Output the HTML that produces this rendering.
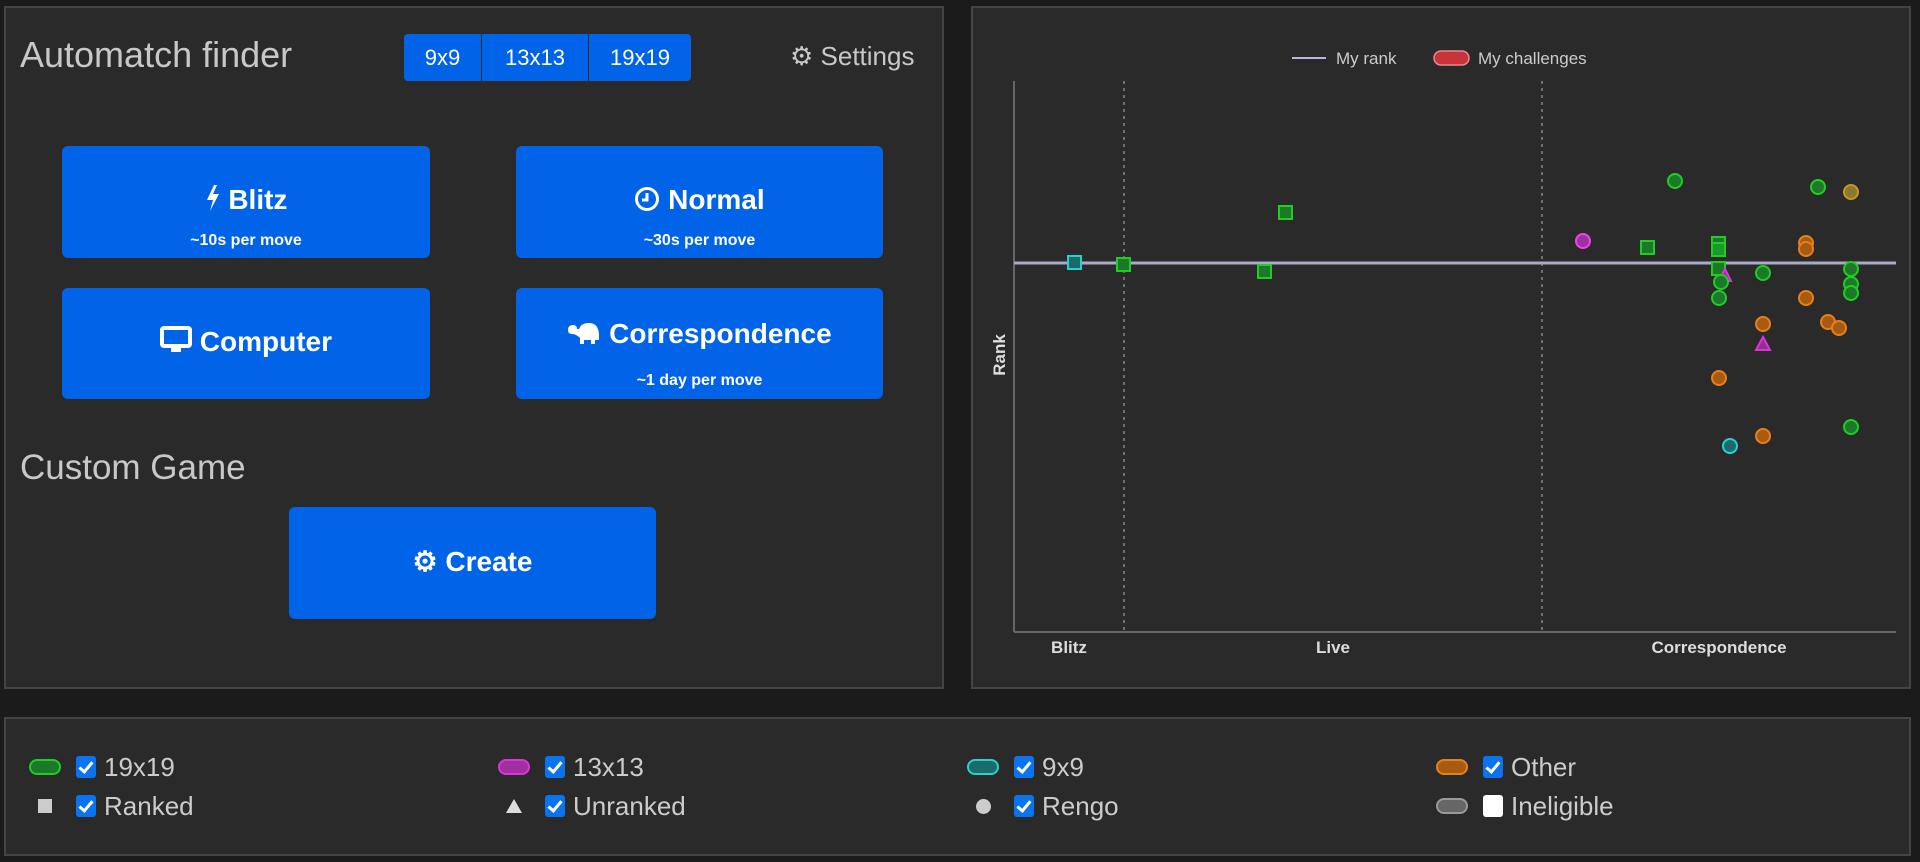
<!DOCTYPE html>
<html><head><meta charset="utf-8"><style>
*{box-sizing:border-box;margin:0;padding:0}
body{width:1920px;height:862px;background:#1b1b1b;font-family:"Liberation Sans",sans-serif;position:relative;overflow:hidden;color:#ddd}
.panel{position:absolute;background:#2a2a2a;border:2px solid #444}
.abs{position:absolute}
.btn{position:absolute;background:#0063e8;border-radius:6px;color:#fff;text-align:center;font-weight:bold}
.btn .t{position:absolute;left:0;right:0;font-size:28px}
.btn .s{position:absolute;left:0;right:0;font-size:16px}
.btn svg{vertical-align:-3px}
.seg{position:absolute;top:34px;height:47px;background:#0063e8;color:#fff;font-size:22px;line-height:47px;text-align:center}
.lg{position:absolute;font-size:26px;color:#ccc;display:flex;align-items:center;height:30px}
.pill{width:32px;height:16px;border-radius:8px;border:2px solid;margin-right:15px}
.cb{width:20px;height:22px;background:#0a74f0;border-radius:3px;margin-right:8px;position:relative}
.cb:after{content:"";position:absolute;left:6px;top:3px;width:5px;height:11px;border:solid #fff;border-width:0 3px 3px 0;transform:rotate(40deg)}
.cb.off{background:#fff}.cb.off:after{display:none}
</style></head><body>
<div class="panel" style="left:4px;top:6px;width:940px;height:683px"></div>
<div class="panel" style="left:971px;top:6px;width:940px;height:683px"></div>
<div class="panel" style="left:4px;top:717px;width:1907px;height:139px"></div>

<div class="abs" style="left:20px;top:34px;font-size:36px;color:#c8c8c8">Automatch finder</div>
<div class="seg" style="left:404px;width:77px;border-radius:4px 0 0 4px">9x9</div>
<div class="seg" style="left:482px;width:106px">13x13</div>
<div class="seg" style="left:589px;width:102px;border-radius:0 4px 4px 0">19x19</div>
<div class="abs" style="left:790px;top:41px;font-size:26px;color:#c8c8c8">⚙ Settings</div>

<div class="btn" style="left:62px;top:146px;width:368px;height:112px"><div class="t" style="top:38px"><svg width="16" height="28" viewBox="0 0 16 28"><path d="M9 1 L2 16 H8 L5 27 L14 10 H8 L12 1 Z" fill="#fff"/></svg> Blitz</div><div class="s" style="top:86px">~10s per move</div></div>
<div class="btn" style="left:516px;top:146px;width:367px;height:112px"><div class="t" style="top:38px"><svg width="26" height="26" viewBox="0 0 26 26"><circle cx="13" cy="13" r="10.5" fill="none" stroke="#fff" stroke-width="3"/><path d="M13 7 V14 H8" fill="none" stroke="#fff" stroke-width="3"/></svg> Normal</div><div class="s" style="top:86px">~30s per move</div></div>
<div class="btn" style="left:62px;top:288px;width:368px;height:111px"><div class="t" style="top:38px"><svg width="32" height="28" viewBox="0 0 32 28"><rect x="2" y="2" width="28" height="18" rx="2" fill="none" stroke="#fff" stroke-width="4"/><rect x="11" y="21" width="10" height="5" fill="#fff"/></svg> Computer</div></div>
<div class="btn" style="left:516px;top:288px;width:367px;height:111px"><div class="t" style="top:30px"><svg width="34" height="26" viewBox="0 0 34 26"><path d="M1 10 Q1 5 6 5 Q10 5 10 9 L12 9 Q14 3 22 3 Q31 3 32 14 L32 20 L28 20 L28 24 L24 24 L24 20 L17 20 L17 24 L13 24 L13 18 Q9 14 5 14 Q1 14 1 10 Z" fill="#fff"/></svg> Correspondence</div><div class="s" style="top:84px">~1 day per move</div></div>

<div class="abs" style="left:20px;top:448px;font-size:35px;color:#c8c8c8">Custom Game</div>
<div class="btn" style="left:289px;top:507px;width:367px;height:112px"><div class="t" style="top:38px">⚙ Create</div></div>

<svg class="abs" style="left:0;top:0" width="1920" height="862">
<line x1="1292" y1="58" x2="1326" y2="58" stroke="#b8b8d8" stroke-width="2"/>
<text x="1336" y="64" font-size="17" fill="#ccc" font-family="Liberation Sans">My rank</text>
<rect x="1434" y="51" width="35" height="14" rx="7" fill="#c8323a" stroke="#e88" stroke-width="1.5"/>
<text x="1478" y="64" font-size="17" fill="#ccc" font-family="Liberation Sans">My challenges</text>
<line x1="1014" y1="81" x2="1014" y2="632" stroke="#666" stroke-width="2"/>
<line x1="1014" y1="632" x2="1896" y2="632" stroke="#666" stroke-width="2"/>
<line x1="1124" y1="81" x2="1124" y2="632" stroke="#888" stroke-width="1.5" stroke-dasharray="3,4"/>
<line x1="1542" y1="81" x2="1542" y2="632" stroke="#888" stroke-width="1.5" stroke-dasharray="3,4"/>
<line x1="1014" y1="263" x2="1896" y2="263" stroke="#a9a9c8" stroke-width="3"/>
<g font-family="Liberation Sans" font-weight="bold" font-size="17" fill="#ddd" text-anchor="middle">
<text x="1069" y="653">Blitz</text><text x="1333" y="653">Live</text><text x="1719" y="653">Correspondence</text>
<text transform="translate(1005,355) rotate(-90)">Rank</text></g>
<g stroke-width="2">
<rect x="1068" y="256" width="13" height="13" fill="#1b6b6b" stroke="#2ad0d0"/>
<rect x="1117" y="258" width="13" height="13" fill="#1a7a2a" stroke="#2c2"/>
<rect x="1279" y="206" width="13" height="13" fill="#1a7a2a" stroke="#2c2"/>
<rect x="1258" y="265" width="13" height="13" fill="#1a7a2a" stroke="#2c2"/>
<rect x="1641" y="241" width="13" height="13" fill="#1a7a2a" stroke="#2c2"/>
<rect x="1712" y="237" width="13" height="13" fill="#1a7a2a" stroke="#2c2"/>
<rect x="1712" y="243" width="13" height="13" fill="#1a9a2a" stroke="#2c2"/>
<rect x="1712" y="262" width="13" height="13" fill="#1a7a2a" stroke="#2c2"/>
<polygon points="1725,269 1731,281 1719,281" fill="#903090" stroke="#d3d"/>
<polygon points="1763,337 1770,350 1756,350" fill="#903090" stroke="#d3d"/>
<g fill="#1a7a2a" stroke="#2c2">
<circle cx="1721" cy="282" r="7"/><circle cx="1719" cy="298" r="7"/><circle cx="1675" cy="181" r="7"/><circle cx="1763" cy="273" r="7"/><circle cx="1818" cy="187" r="7"/><circle cx="1851" cy="269" r="7"/><circle cx="1851" cy="284" r="7"/><circle cx="1851" cy="293" r="7"/><circle cx="1851" cy="427" r="7"/></g>
<g fill="#a85a10" stroke="#e8801a">
<circle cx="1806" cy="243" r="7"/><circle cx="1806" cy="249" r="7"/><circle cx="1806" cy="298" r="7"/><circle cx="1763" cy="324" r="7"/><circle cx="1828" cy="322" r="7"/><circle cx="1839" cy="328" r="7"/><circle cx="1719" cy="378" r="7"/><circle cx="1763" cy="436" r="7"/></g>
<circle cx="1851" cy="192" r="7" fill="#8a7a30" stroke="#c9952a"/>
<circle cx="1583" cy="241" r="7" fill="#a030a0" stroke="#e4e"/>
<circle cx="1730" cy="446" r="7" fill="#1b6b6b" stroke="#2ad0d0"/>
</g></svg>

<div class="lg" style="left:29px;top:752px"><div class="pill" style="background:#1a7a2a;border-color:#2c2"></div><div class="cb"></div>19x19</div>
<div class="lg" style="left:498px;top:752px"><div class="pill" style="background:#a030a0;border-color:#d3d"></div><div class="cb"></div>13x13</div>
<div class="lg" style="left:967px;top:752px"><div class="pill" style="background:#1b6b6b;border-color:#2ad0d0"></div><div class="cb"></div>9x9</div>
<div class="lg" style="left:1436px;top:752px"><div class="pill" style="background:#a85a10;border-color:#e8801a"></div><div class="cb"></div>Other</div>
<div class="lg" style="left:29px;top:791px"><div style="width:32px;margin-right:15px;display:flex;justify-content:center"><div style="width:14px;height:14px;background:#ccc"></div></div><div class="cb"></div>Ranked</div>
<div class="lg" style="left:498px;top:791px"><div style="width:32px;margin-right:15px;display:flex;justify-content:center"><div style="width:0;height:0;border-left:8px solid transparent;border-right:8px solid transparent;border-bottom:14px solid #ddd"></div></div><div class="cb"></div>Unranked</div>
<div class="lg" style="left:967px;top:791px"><div style="width:32px;margin-right:15px;display:flex;justify-content:center"><div style="width:15px;height:15px;border-radius:50%;background:#ccc"></div></div><div class="cb"></div>Rengo</div>
<div class="lg" style="left:1436px;top:791px"><div class="pill" style="background:#666;border-color:#999"></div><div class="cb off"></div>Ineligible</div>
</body></html>
